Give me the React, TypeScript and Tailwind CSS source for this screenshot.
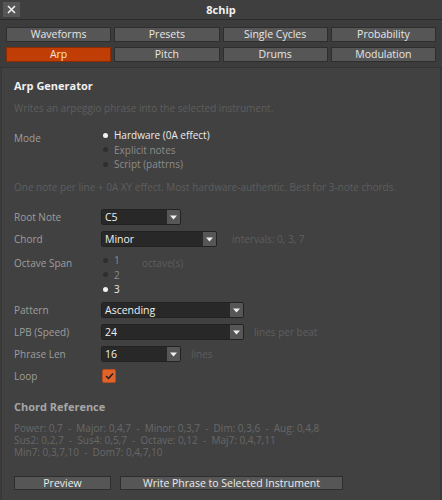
import React from "react";

const font = { fontFamily: '"Open Sans", "Noto Sans", sans-serif' };

function Tab({ label, active }: { label: string; active?: boolean }) {
  return (
    <div
      className={
        "h-[15px] flex items-center justify-center text-[10.5px] leading-none border " +
        (active
          ? "bg-[#c03e05] border-[#8a2c02] text-[#f4e4dc]"
          : "bg-[#565656] border-[#2e2e2e] text-[#e6e6e6]")
      }
    >
      {label}
    </div>
  );
}

function Radio({ label, on }: { label: string; on?: boolean }) {
  return (
    <div className="flex items-center h-[14.5px]">
      <span
        className={
          "w-[5px] h-[5px] rounded-full mr-[6px] ml-[2px] " +
          (on ? "bg-[#f2f2f2]" : "bg-[#2f2f2f]")
        }
      />
      <span className={on ? "text-[#ececec]" : "text-[#8c8c8c]"}>{label}</span>
    </div>
  );
}

function Select({ value, width }: { value: string; width: number }) {
  return (
    <div
      className="h-[16px] flex border border-[#222] rounded-[2px] overflow-hidden text-[10.5px]"
      style={{ width }}
    >
      <div className="flex-1 bg-[#282828] text-[#f0f0f0] pl-[3px] flex items-center leading-none">
        {value}
      </div>
      <div className="w-[13px] bg-[#565656] flex items-center justify-center">
        <svg width="7" height="5" viewBox="0 0 7 5">
          <path d="M0 0.5 L7 0.5 L3.5 4.5 Z" fill="#f0f0f0" />
        </svg>
      </div>
    </div>
  );
}

function Row({ label, children }: { label: string; children: React.ReactNode }) {
  return (
    <div className="flex items-start h-[22px]">
      <div className="w-[87px] h-[16px] flex items-center text-[#9e9e9e]">{label}</div>
      <div className="flex-1">{children}</div>
    </div>
  );
}

export default function App() {
  return (
    <div
      className="w-[442px] h-[500px] bg-[#3b3b3b] text-[10px] leading-[14px] flex flex-col overflow-hidden"
      style={font}
    >
      {/* title bar */}
      <div className="h-[20px] shrink-0 grid grid-cols-[1fr_auto_1fr] items-center bg-[#3f3f3f] border-b border-[#2b2b2b]">
        <div className="pl-[3px]">
          <div className="w-[17px] h-[15px] bg-[#565656] flex items-center justify-center">
            <svg width="9" height="9" viewBox="0 0 9 9">
              <path d="M1 1 L8 8 M8 1 L1 8" stroke="#f0f0f0" strokeWidth="1.6" />
            </svg>
          </div>
        </div>
        <div className="text-[#f2f2f2] font-bold text-[11px]">8chip</div>
        <div />
      </div>

      {/* tabs */}
      <div className="h-[48px] shrink-0 px-[6px] pt-[7px] grid grid-cols-4 grid-rows-[15px_15px] gap-x-[3px] gap-y-[5px] bg-[#3c3c3c] border-b border-[#333]">
        <Tab label="Waveforms" />
        <Tab label="Presets" />
        <Tab label="Single Cycles" />
        <Tab label="Probability" />
        <Tab label="Arp" active />
        <Tab label="Pitch" />
        <Tab label="Drums" />
        <Tab label="Modulation" />
      </div>

      {/* content */}
      <div className="flex-1 mx-[1px] bg-[#414141] border-l border-r border-[#363636] px-[12px] pt-[11px]">
        <div className="text-[#f0f0f0] font-bold text-[11px] h-[14px]">Arp Generator</div>
        <div className="text-[#5e5e5e] mt-[8px] h-[14px]">
          Writes an arpeggio phrase into the selected instrument.
        </div>

        <div className="mt-[13px] flex h-[43.5px]">
          <div className="w-[87px] text-[#9e9e9e] pt-[3px]">Mode</div>
          <div>
            <Radio label="Hardware (0A effect)" on />
            <Radio label="Explicit notes" />
            <Radio label="Script (pattrns)" />
          </div>
        </div>

        <div className="text-[#5e5e5e] mt-[8.5px] h-[14px]">
          One note per line + 0A XY effect. Most hardware-authentic. Best for 3-note chords.
        </div>

        <div className="mt-[15px] flex flex-col">
          <Row label="Root Note">
            <Select value="C5" width={80} />
          </Row>
          <Row label="Chord">
            <div className="flex items-center">
              <Select value="Minor" width={116} />
              <span className="ml-[15px] text-[#5e5e5e]">intervals: 0, 3, 7</span>
            </div>
          </Row>
          <div className="flex h-[49px]">
            <div className="w-[87px] text-[#9e9e9e] pt-[3px]">Octave Span</div>
            <div className="flex">
              <div className="w-[41px]">
                <Radio label="1" />
                <Radio label="2" />
                <Radio label="3" on />
              </div>
              <span className="text-[#5e5e5e] pt-[3px]">octave(s)</span>
            </div>
          </div>
          <Row label="Pattern">
            <Select value="Ascending" width={143} />
          </Row>
          <Row label="LPB (Speed)">
            <div className="flex items-center">
              <Select value="24" width={143} />
              <span className="ml-[10px] text-[#5e5e5e]">lines per beat</span>
            </div>
          </Row>
          <Row label="Phrase Len">
            <div className="flex items-center">
              <Select value="16" width={80} />
              <span className="ml-[10px] text-[#5e5e5e]">lines</span>
            </div>
          </Row>
          <Row label="Loop">
            <div className="w-[14px] h-[14px] ml-[1px] mt-[1px] rounded-[2px] bg-[#e0632c] border border-[#b84c1c] flex items-center justify-center">
              <svg width="9" height="8" viewBox="0 0 9 8">
                <path d="M1 4 L3.5 6.5 L8 1.5" stroke="#1a1a1a" strokeWidth="1.4" fill="none" />
              </svg>
            </div>
          </Row>
        </div>

        <div className="text-[#a6a6a6] font-bold text-[11px] mt-[10px] h-[14px]">Chord Reference</div>
        <div className="text-[#686868] mt-[8px] leading-[12px]">
          <div>Power: 0,7&nbsp; -&nbsp; Major: 0,4,7&nbsp; -&nbsp; Minor: 0,3,7&nbsp; -&nbsp; Dim: 0,3,6&nbsp; -&nbsp; Aug: 0,4,8</div>
          <div>Sus2: 0,2,7&nbsp; -&nbsp; Sus4: 0,5,7&nbsp; -&nbsp; Octave: 0,12&nbsp; -&nbsp; Maj7: 0,4,7,11</div>
          <div>Min7: 0,3,7,10&nbsp; -&nbsp; Dom7: 0,4,7,10</div>
        </div>

        <div className="mt-[18px] flex gap-[9px] text-[10.5px]">
          <div className="w-[97px] h-[14px] bg-[#565656] border border-[#2e2e2e] text-[#ececec] flex items-center justify-center leading-none">
            Preview
          </div>
          <div className="w-[223px] h-[14px] bg-[#565656] border border-[#2e2e2e] text-[#ececec] flex items-center justify-center leading-none">
            Write Phrase to Selected Instrument
          </div>
        </div>
      </div>
    </div>
  );
}
